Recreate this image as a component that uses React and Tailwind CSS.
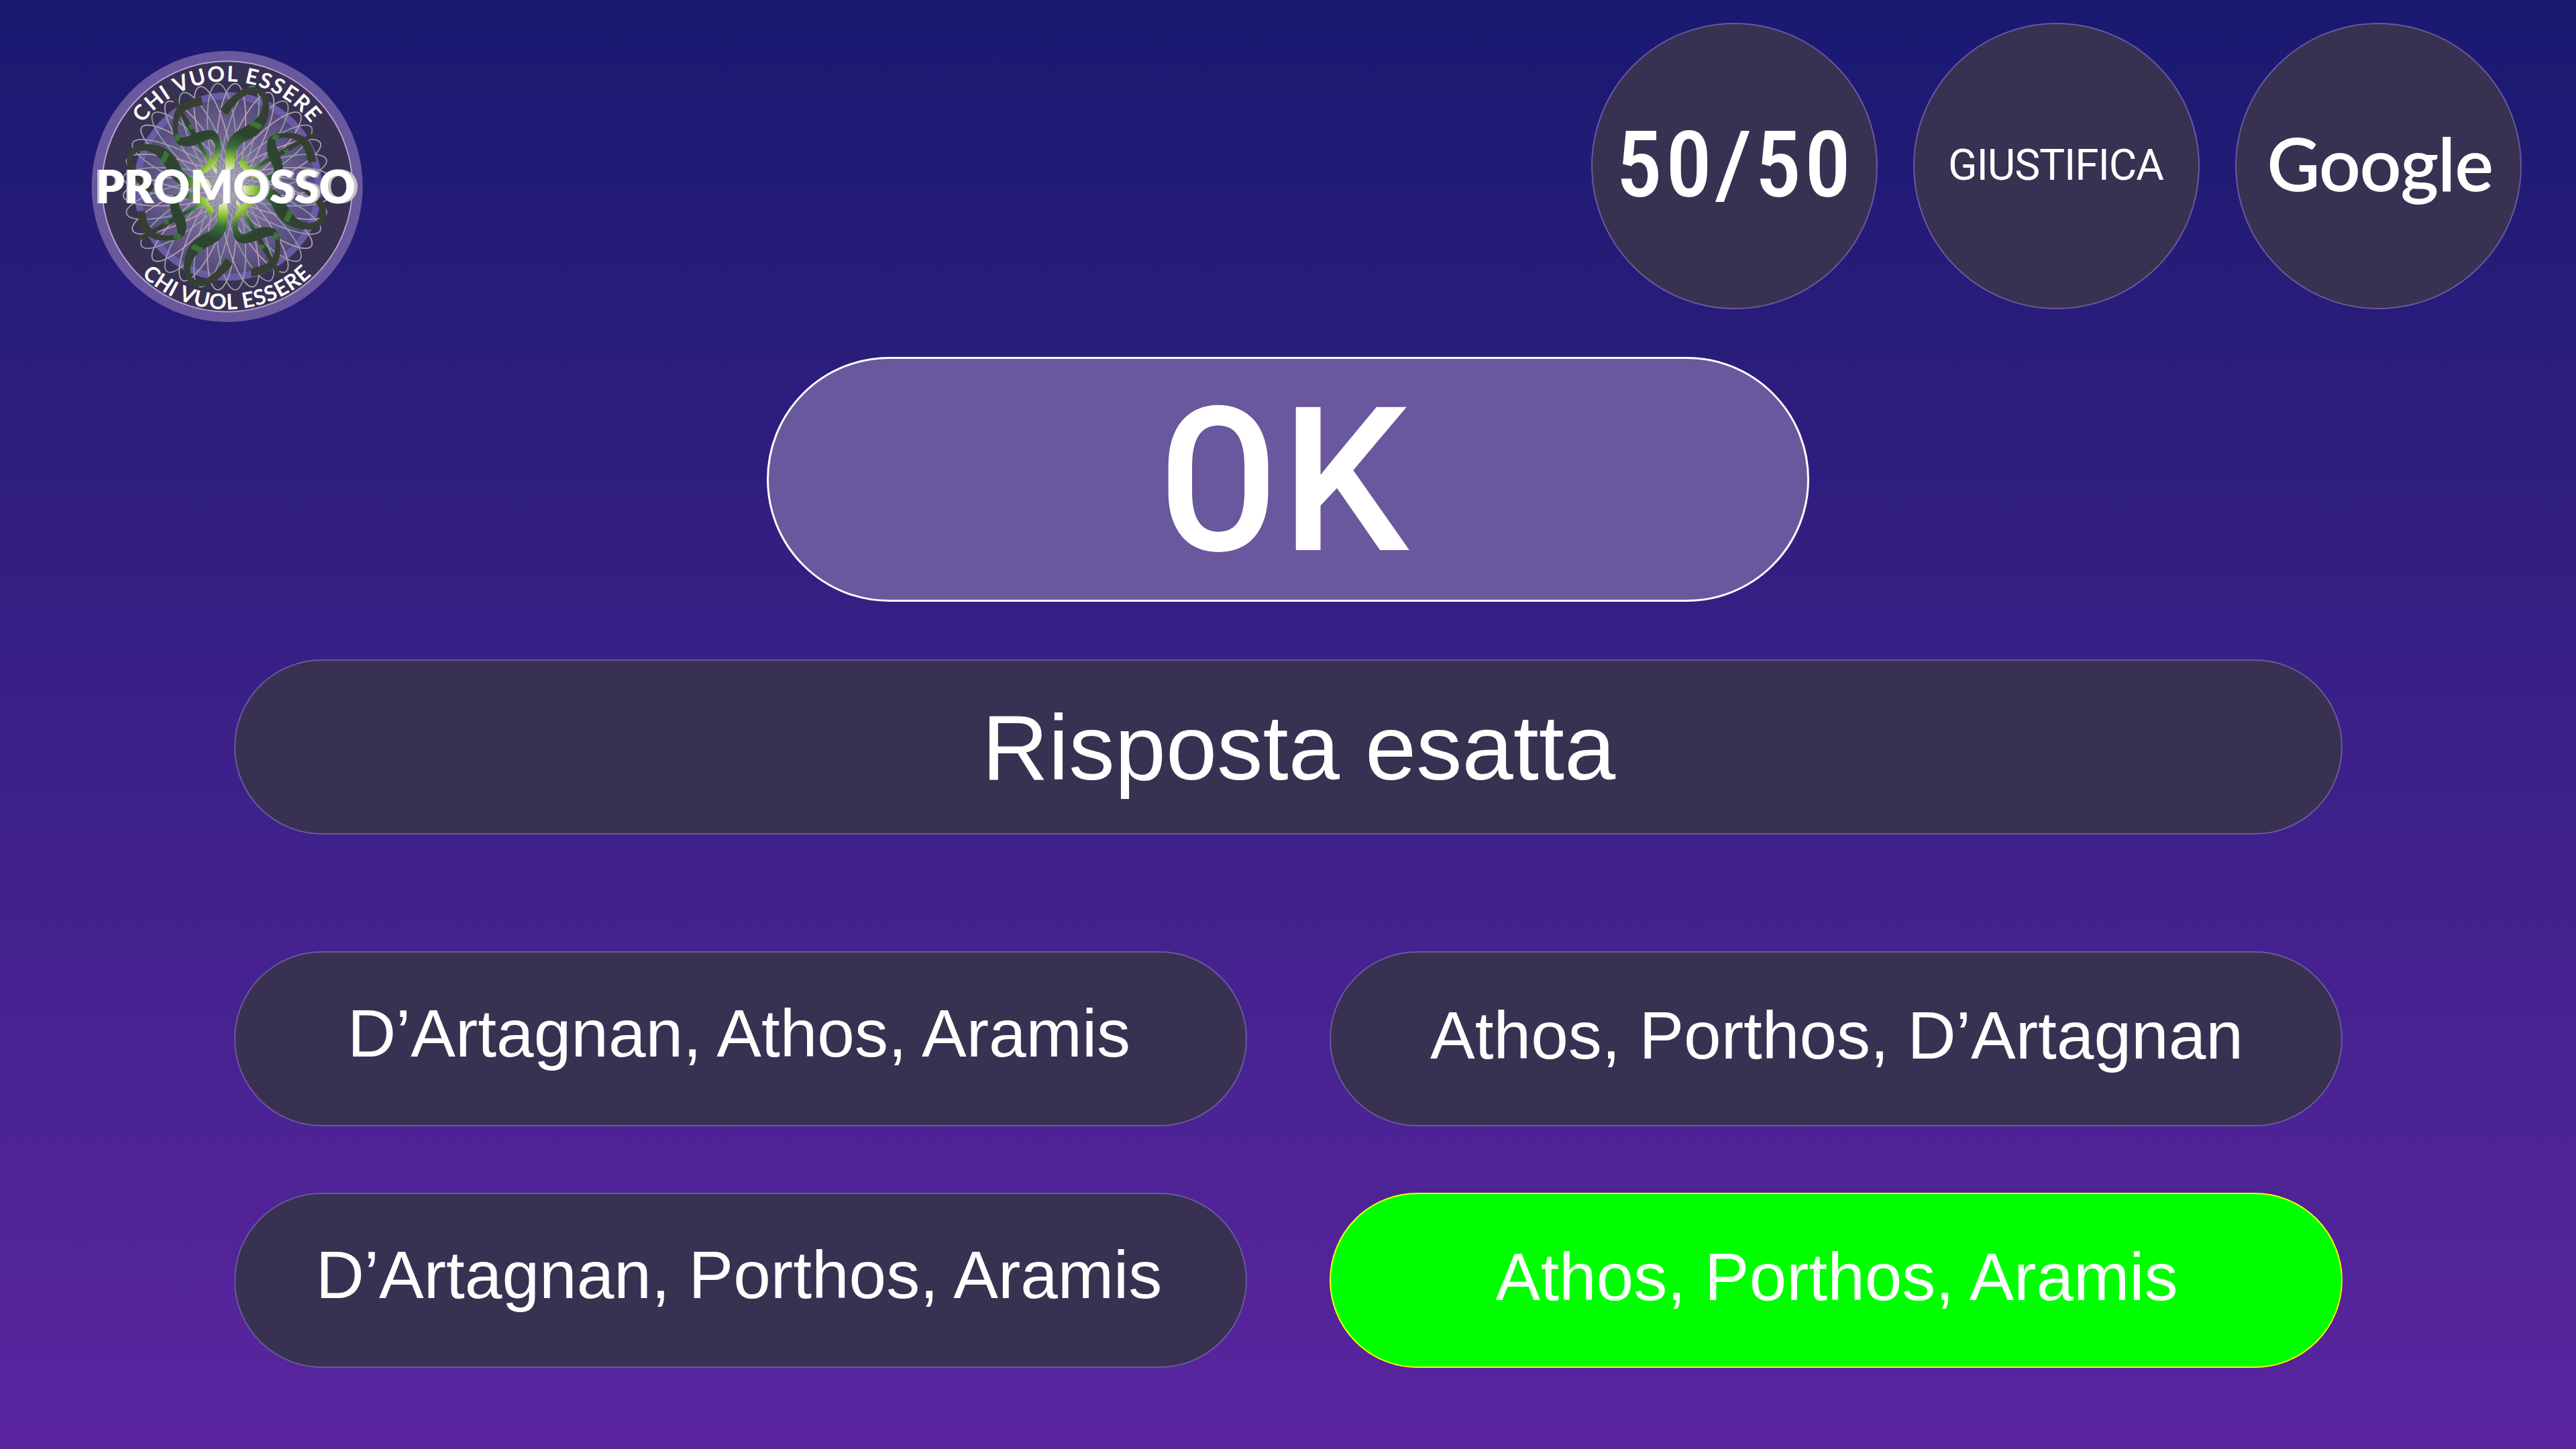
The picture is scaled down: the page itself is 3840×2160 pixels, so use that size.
const QUARTERS = [0, 90, 180, 270];

// Closed rosette with 9 looping tips, traced as a hypotrochoid.
function rosette(degrees) {
  const phase = (degrees * Math.PI) / 180;
  const points = [];
  const steps = 900;
  for (let i = 0; i < steps; i++) {
    const t = (i / steps) * 8 * Math.PI;
    const a = t + phase;
    const b = -1.25 * t + phase;
    const x = 653 + 211 * Math.cos(a) + 252 * Math.cos(b);
    const y = 655 + 211 * Math.sin(a) + 252 * Math.sin(b);
    points.push(`${x.toFixed(1)},${y.toFixed(1)}`);
  }
  return points.join(" ");
}

const PINK_ROSETTES = [rosette(-85), rosette(-65)];
const TEAL_ROSETTES = [rosette(-95), rosette(-75)];

function Flourish({ angle }) {
  return (
    <g transform={`rotate(${angle} 653 655)`}>
      <g fill="url(#ribbon)">
        <path d="M414 258 L430 256 C440 285 458 315 474 345 L502 386 C525 440 560 500 612 580 L606 598 C570 545 535 490 520 460 L480 396 C455 350 430 310 414 270 Z" />
        <path d="M542 253 L545 290 C490 300 448 315 438 360 C432 400 432 422 445 434 C480 442 515 402 580 402 C625 406 632 455 622 510 C612 560 580 580 545 603 L520 580 C560 560 600 530 602 485 C604 438 580 438 555 450 C515 475 475 480 440 468 C408 450 408 370 418 335 C432 280 490 262 542 253 Z" />
        <path d="M655 337 L625 310 C685 235 735 205 780 209 C835 215 850 270 842 320 C835 390 790 428 745 448 C705 466 690 490 690 556 L688 572 L648 590 L648 510 C650 455 672 425 710 400 C765 372 802 350 814 300 C818 255 805 234 770 235 C735 240 692 275 655 337 Z" />
      </g>
      <g fill="#397438">
        <path d="M770 359 L815 379 L800 399 L757 380 Z" />
        <path d="M425 416 L448 431 L436 455 L418 442 Z" />
        <path d="M481 382 L496 373 L507 392 L492 401 Z" />
        <path d="M642 332 L662 332 L656 340 Z" />
      </g>
    </g>
  );
}

function ShowLogo() {
  return (
    <svg viewBox="0 0 1320 1320" className="size-[440px] shrink-0">
      <defs>
        <radialGradient id="ribbon" gradientUnits="userSpaceOnUse" cx="653" cy="655" r="450">
          <stop offset="0.12" stopColor="#f4faea" />
          <stop offset="0.2" stopColor="#cfe39c" />
          <stop offset="0.28" stopColor="#93c43c" />
          <stop offset="0.4" stopColor="#37703a" />
          <stop offset="0.54" stopColor="#2d442f" />
          <stop offset="0.9" stopColor="#353f32" />
        </radialGradient>
        <radialGradient id="disc" gradientUnits="userSpaceOnUse" cx="653" cy="655" r="400">
          <stop offset="0" stopColor="#a598c4" />
          <stop offset="0.45" stopColor="#786b9a" />
          <stop offset="1" stopColor="#54487a" />
        </radialGradient>
        <path id="arc-top" d="M183 655 A471 471 0 0 1 1125 655" />
        <path id="arc-bottom" d="M105 655 A549 549 0 0 0 1203 655" />
      </defs>

      <circle cx="656" cy="654" r="606" fill="#69589d" />
      <circle cx="656" cy="654" r="560" fill="#393152" stroke="#b3a3d0" strokeWidth="6" />
      <circle cx="659" cy="654" r="406" fill="url(#disc)" stroke="#6a5ba5" strokeWidth="31" />

      <g fill="none" strokeWidth="5.5" strokeLinejoin="round">
        {TEAL_ROSETTES.map((points) => (
          <polygon key={points} points={points} stroke="#8b9fa4" />
        ))}
        {PINK_ROSETTES.map((points) => (
          <polygon key={points} points={points} stroke="#ae9fae" />
        ))}
      </g>

      {QUARTERS.map((angle) => (
        <Flourish key={angle} angle={angle} />
      ))}

      <g fill="#fff" className="font-[Lato] font-bold">
        <text fontSize="96">
          <textPath href="#arc-top" startOffset="50%" textAnchor="middle" textLength="872" lengthAdjust="spacing">
            CHI VUOL ESSERE
          </textPath>
        </text>
        <text fontSize="96">
          <textPath href="#arc-bottom" startOffset="50%" textAnchor="middle" textLength="840" lengthAdjust="spacing">
            CHI VUOL ESSERE
          </textPath>
        </text>
      </g>

      <use href="#title" fill="#c4c4c4" transform="translate(-10.4 0) scale(1.0205 1)" />
      <g fill="#fff">
        <text id="title" x="70" y="728" fontSize="205" className="font-[Lato] font-extrabold" textLength="1160" lengthAdjust="spacingAndGlyphs">
          PROMOSSO
        </text>
      </g>
    </svg>
  );
}

function Lifeline({ children }) {
  return (
    <button className="flex size-[427px] items-start justify-center rounded-full border-2 border-[#69589d] bg-[#393152] whitespace-nowrap">
      {children}
    </button>
  );
}

function Answer({ children, correct = false, className }) {
  const tone = correct ? "border-[#ffff00] bg-[#00ff00]" : "border-[#69589d] bg-[#393152]";
  return (
    <button
      className={`flex h-[261px] items-start justify-center rounded-full border-2 text-[100px] leading-none whitespace-nowrap ${tone} ${className}`}
    >
      {children}
    </button>
  );
}

export default function App() {
  return (
    <div className="flex h-[2160px] w-[3840px] flex-col overflow-hidden bg-linear-to-b from-[#191970] to-[#5a259f] font-['Liberation_Sans',sans-serif] text-white">
      <header className="flex h-[532px] shrink-0 items-start justify-between pr-[81px] pl-[120px]">
        <div className="pt-[60px]">
          <ShowLogo />
        </div>
        <div className="flex gap-[53px] pt-[34px]">
          <Lifeline>
            <span className="pt-[141px] pl-[2px] font-[Roboto] text-[138px] leading-none font-medium tracking-[0.037em] [font-stretch:75%]">
              50<span className="[font-stretch:100%]">/</span>50
            </span>
          </Lifeline>
          <Lifeline>
            <span className="pt-[179px] pr-[2px] font-[Roboto] text-[64px] leading-none tracking-[-0.018em]">GIUSTIFICA</span>
          </Lifeline>
          <Lifeline>
            <span className="pt-[152px] pl-[4px] font-[Lato] text-[109px] leading-none font-semibold tracking-[-0.012em]">Google</span>
          </Lifeline>
        </div>
      </header>

      <main className="flex flex-col items-center">
        <button className="flex h-[365px] w-[1554px] items-start justify-center rounded-full border-3 border-white bg-[#69589d] pt-[33px] pr-[11px] font-[Roboto] text-[300px] leading-none font-medium tracking-[0.012em] [font-stretch:75%]">
          <span>
            O<span className="[font-stretch:100%]">K</span>
          </span>
        </button>

        <h1 className="mt-[86px] flex h-[261px] w-[3143px] items-start justify-center rounded-full border-2 border-[#69589d] bg-[#393152] pt-[61px] pl-[32px] text-[137px] leading-none">
          Risposta esatta
        </h1>

        <div className="mt-[174px] grid w-[3143px] grid-cols-2 gap-x-[123px] gap-y-[99px]">
          <Answer className="pt-[70px] pr-[4px]">D’Artagnan, Athos, Aramis</Answer>
          <Answer className="pt-[73px] pl-[3px]">Athos, Porthos, D’Artagnan</Answer>
          <Answer className="pt-[70px] pr-[4px]">D’Artagnan, Porthos, Aramis</Answer>
          <Answer correct className="pt-[73px] pl-[3px]">Athos, Porthos, Aramis</Answer>
        </div>
      </main>
    </div>
  );
}
